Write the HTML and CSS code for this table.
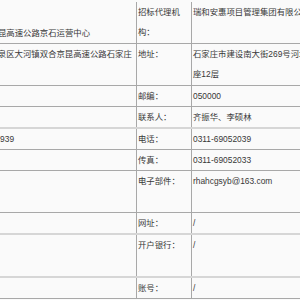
FILE: index.html
```html
<!DOCTYPE html>
<html lang="zh-CN">
<head>
<meta charset="utf-8">
<title>招标公告</title>
<link rel="stylesheet" href="styles.css">
</head>
<body>
<div class="viewport">
<table class="info">
  <colgroup>
    <col class="c-val1">
    <col class="c-lab">
    <col class="c-val2">
  </colgroup>
  <tr class="two">
    <td class="at-bottom indent">河北省京昆高速公路京石运营中心</td>
    <td class="lab">招标代理机构：</td>
    <td>瑞和安惠项目管理集团有限公司</td>
  </tr>
  <tr class="two">
    <td>石家庄市鹿泉区大河镇双合京昆高速公路石家庄</td>
    <td class="lab">地址：</td>
    <td class="wrap-addr">石家庄市建设南大街269号河北省建设大厦A座12层</td>
  </tr>
  <tr>
    <td></td>
    <td class="lab">邮编：</td>
    <td>050000</td>
  </tr>
  <tr>
    <td></td>
    <td class="lab">联系人：</td>
    <td>齐振华、李硕林</td>
  </tr>
  <tr class="sep">
    <td>0311-86601939</td>
    <td class="lab">电话：</td>
    <td>0311-69052039</td>
  </tr>
  <tr>
    <td></td>
    <td class="lab">传真：</td>
    <td>0311-69052033</td>
  </tr>
  <tr class="two">
    <td></td>
    <td class="lab">电子部件：</td>
    <td>rhahcgsyb@163.com</td>
  </tr>
  <tr>
    <td></td>
    <td class="lab">网址：</td>
    <td>/</td>
  </tr>
  <tr class="two sep">
    <td></td>
    <td class="lab">开户银行：</td>
    <td>/</td>
  </tr>
  <tr class="sep">
    <td></td>
    <td class="lab">账号：</td>
    <td>/</td>
  </tr>
</table>
</div>
</body>
</html>
```

FILE: styles.css
```css
html, body {
  margin: 0;
  padding: 0;
  background: #fafafa;
}
.viewport {
  width: 300px;
  height: 300px;
  overflow: hidden;
}
.info {
  margin-left: -46px;
  margin-top: 2px;
  border-collapse: collapse;
  table-layout: fixed;
  width: 467px;
  font-family: "Liberation Sans", "Noto Sans CJK SC", sans-serif;
  font-size: 8.4px;
  line-height: 20px;
  color: #383838;
}
.c-val1 { width: 182px; }
.c-lab { width: 55px; }
.c-val2 { width: 230px; }
.info td {
  border: 1px solid #a8a8a8;
  padding: 0 0 0 1px;
  vertical-align: top;
  word-break: break-all;
}
.info td.lab { padding-right: 6px; }
.info tr:first-child td { border-top: none; }
.info .two td { height: 41px; }
.info .sep td { border-top: 2px solid #d6d6d6; }
.info td.at-bottom { vertical-align: bottom; }
.info td.indent { text-indent: 1em; }
.info td.wrap-addr { padding-right: 60px; }
```
